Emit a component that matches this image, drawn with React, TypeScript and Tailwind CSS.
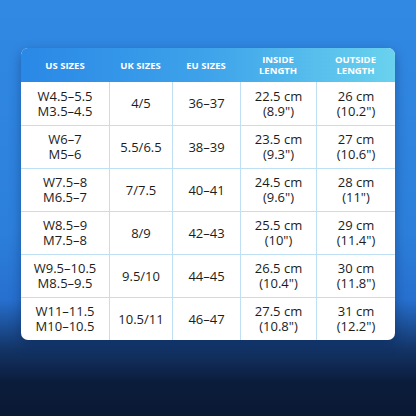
const rows = [
  ["W4.5–5.5", "M3.5–4.5", "4/5", "36–37", "22.5 cm", "(8.9\")", "26 cm", "(10.2\")"],
  ["W6–7", "M5–6", "5.5/6.5", "38–39", "23.5 cm", "(9.3\")", "27 cm", "(10.6\")"],
  ["W7.5–8", "M6.5–7", "7/7.5", "40–41", "24.5 cm", "(9.6\")", "28 cm", "(11\")"],
  ["W8.5–9", "M7.5–8", "8/9", "42–43", "25.5 cm", "(10\")", "29 cm", "(11.4\")"],
  ["W9.5–10.5", "M8.5–9.5", "9.5/10", "44–45", "26.5 cm", "(10.4\")", "30 cm", "(11.8\")"],
  ["W11–11.5", "M10–10.5", "10.5/11", "46–47", "27.5 cm", "(10.8\")", "31 cm", "(12.2\")"],
];

const cols = "grid grid-cols-[88px_63px_68px_76px_79px]";

export default function App() {
  return (
    <div className="w-[416px] h-[416px] bg-[linear-gradient(180deg,#3189e3_0%,#2c80dc_55%,#2770cf_72%,#133466_84%,#0b1c3b_92%,#0a1934_100%)] flex flex-col items-center pt-[48px] font-['Open_Sans',sans-serif]">
      <div className="w-[374px] rounded-[7px] overflow-hidden bg-white shadow-[0_4px_12px_rgba(0,20,60,0.35)]">
        <div className={`${cols} h-[34px] bg-gradient-to-r from-[#2a88e6] via-[#3ea3ea] to-[#6ad2ee] text-white text-[9.5px] font-bold leading-[11px] text-center`}>
          <div className="flex items-center justify-center">US SIZES</div>
          <div className="flex items-center justify-center">UK SIZES</div>
          <div className="flex items-center justify-center">EU SIZES</div>
          <div className="flex items-center justify-center">INSIDE<br />LENGTH</div>
          <div className="flex items-center justify-center">OUTSIDE<br />LENGTH</div>
        </div>
        {rows.map((r, i) => (
          <div
            key={i}
            className={`${cols} h-[43px] text-[#1c1c1c] text-[13px] leading-[15px] text-center ${i > 0 ? "border-t border-[#bfe0f4]" : ""}`}
          >
            <div className="flex flex-col items-center justify-center">
              <span>{r[0]}</span>
              <span>{r[1]}</span>
            </div>
            <div className="flex items-center justify-center border-l border-[#bfe0f4]">{r[2]}</div>
            <div className="flex items-center justify-center border-l border-[#bfe0f4]">{r[3]}</div>
            <div className="flex flex-col items-center justify-center border-l border-[#bfe0f4]">
              <span>{r[4]}</span>
              <span>{r[5]}</span>
            </div>
            <div className="flex flex-col items-center justify-center border-l border-[#bfe0f4]">
              <span>{r[6]}</span>
              <span>{r[7]}</span>
            </div>
          </div>
        ))}
      </div>
    </div>
  );
}
